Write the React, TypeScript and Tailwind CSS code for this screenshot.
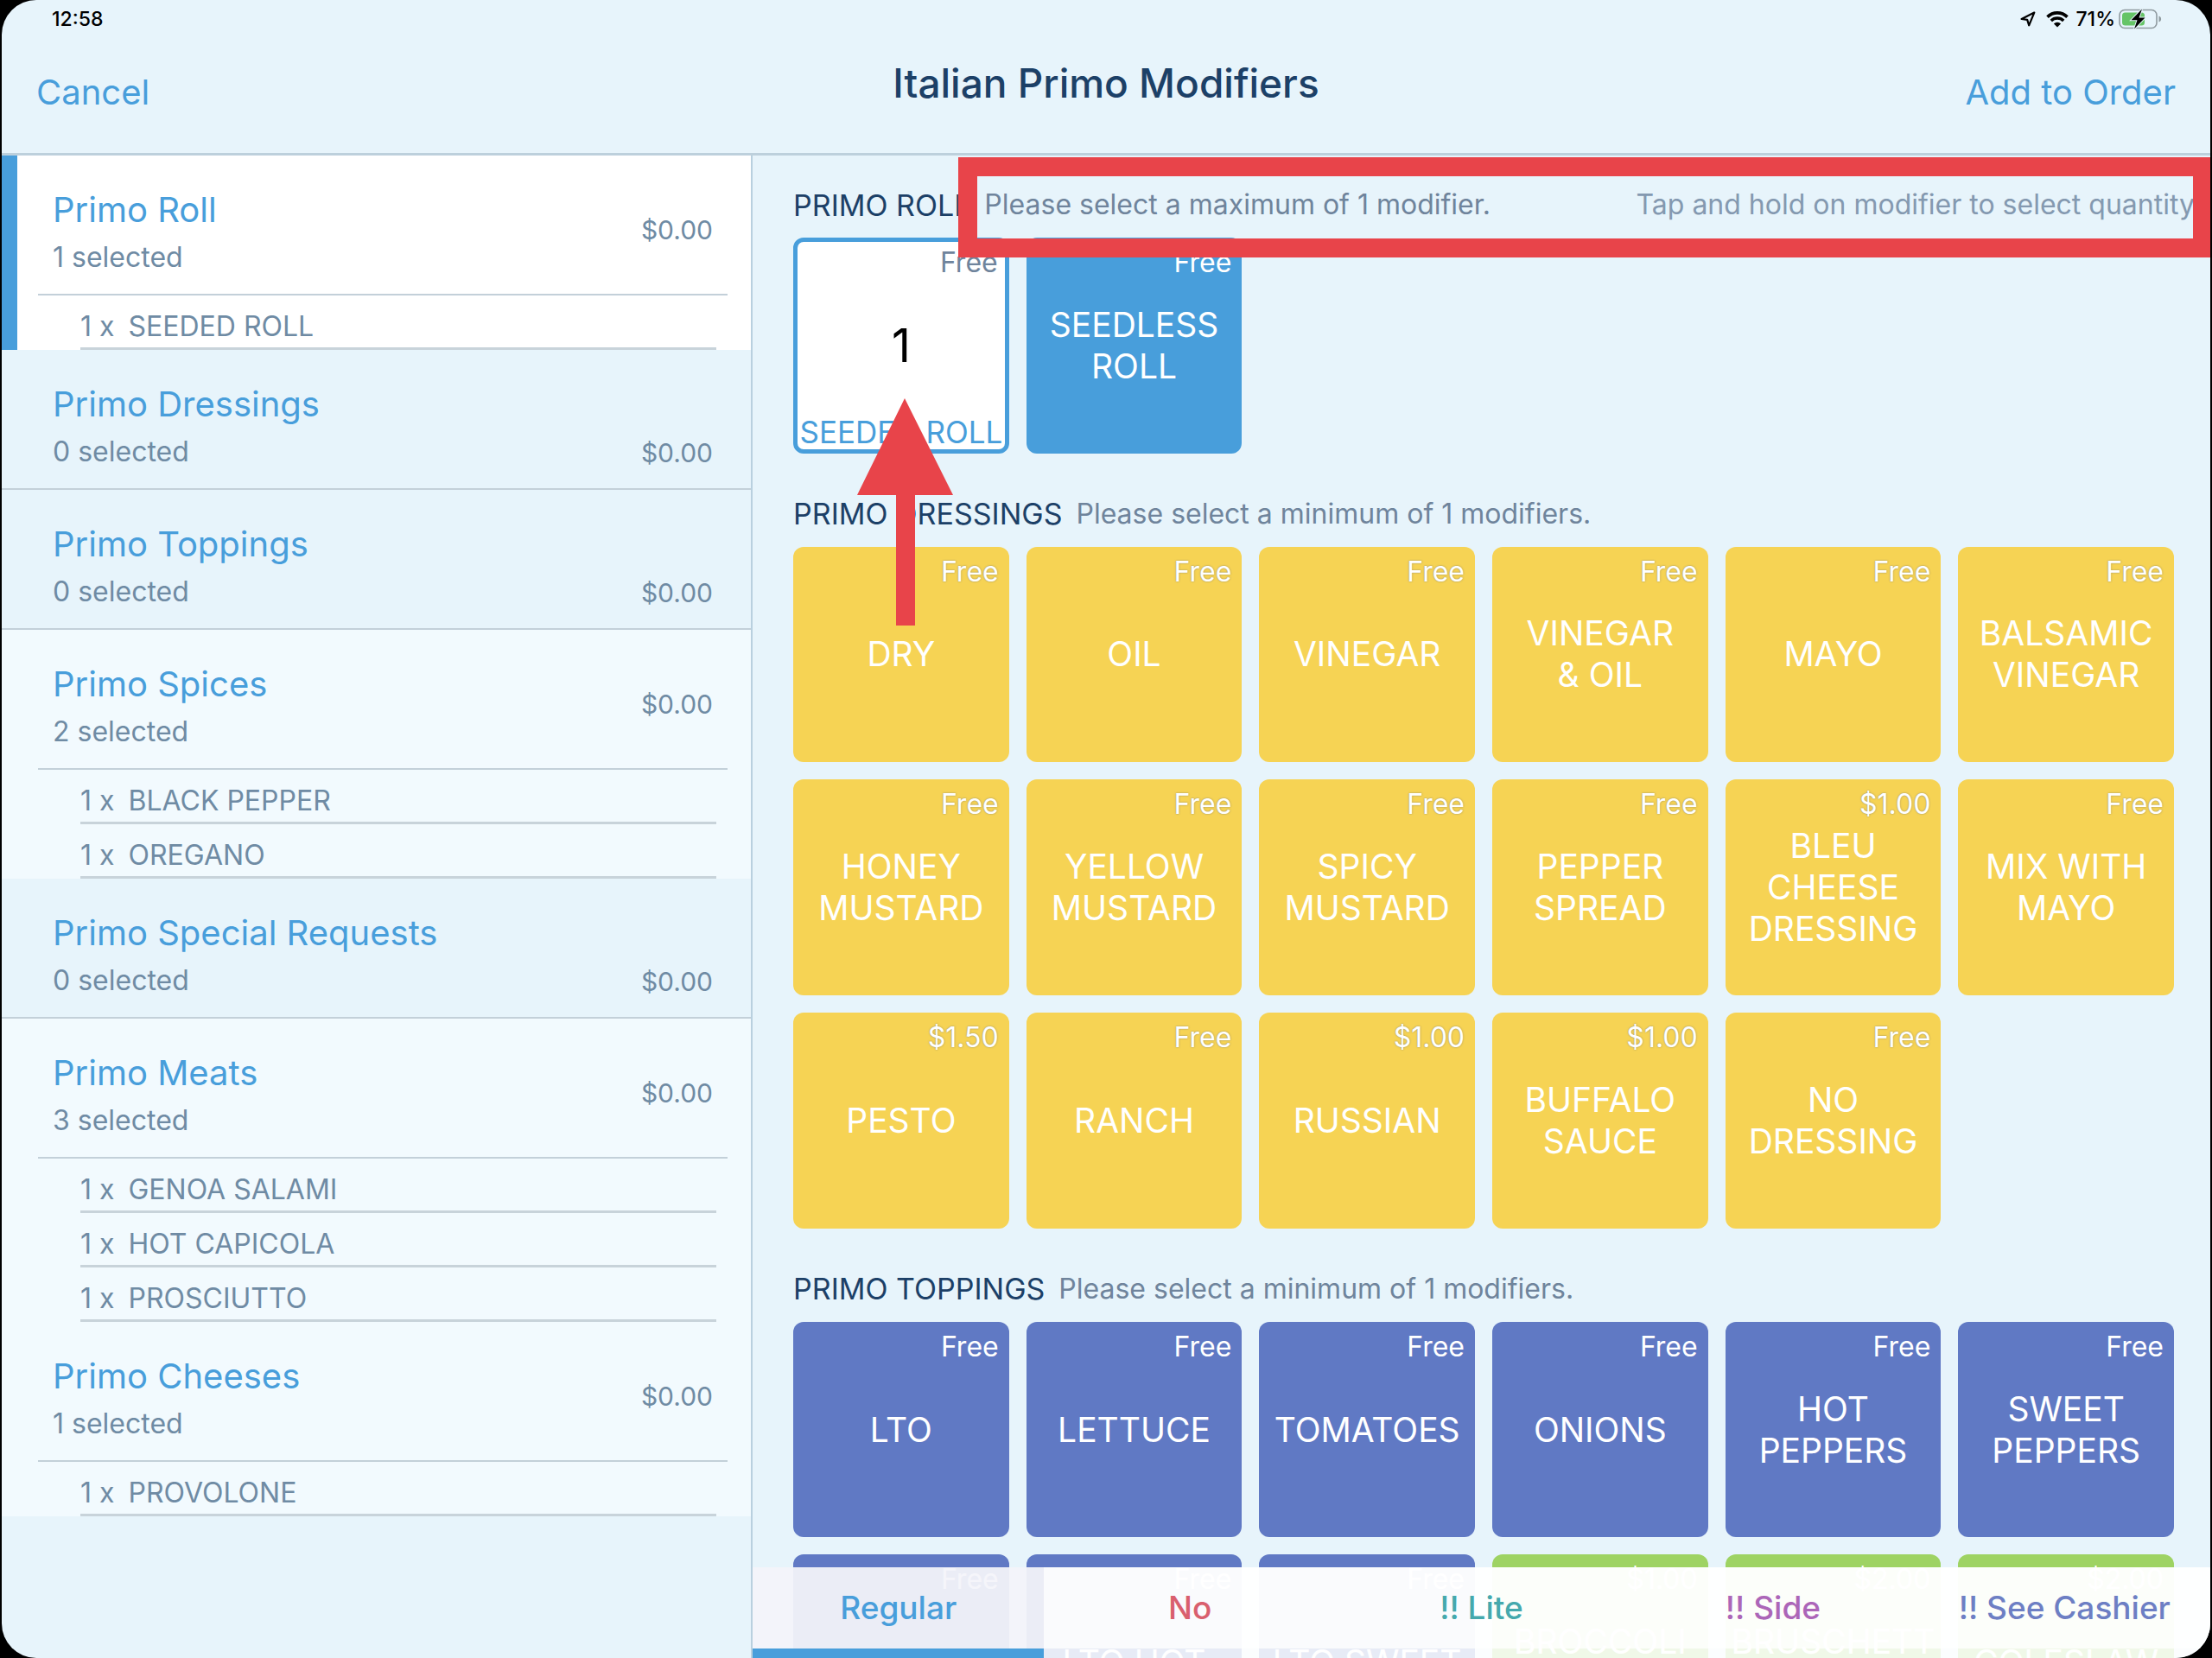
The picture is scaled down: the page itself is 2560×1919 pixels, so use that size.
import React, { useState } from 'react';

type Tone = 'blue' | 'yellow' | 'indigo' | 'green';

interface Modifier {
  name: string;
  price?: string;
  quantity?: number;
  tone?: Tone;
}

interface ModifierGroup {
  title: string;
  hint: string;
  note?: string;
  tone: Tone;
  modifiers: Modifier[];
}

interface SidebarGroup {
  name: string;
  items: string[];
}

const sidebarGroups: SidebarGroup[] = [
  { name: 'Primo Roll', items: ['SEEDED ROLL'] },
  { name: 'Primo Dressings', items: [] },
  { name: 'Primo Toppings', items: [] },
  { name: 'Primo Spices', items: ['BLACK PEPPER', 'OREGANO'] },
  { name: 'Primo Special Requests', items: [] },
  { name: 'Primo Meats', items: ['GENOA SALAMI', 'HOT CAPICOLA', 'PROSCIUTTO'] },
  { name: 'Primo Cheeses', items: ['PROVOLONE'] },
];

const modifierGroups: ModifierGroup[] = [
  {
    title: 'PRIMO ROLL',
    hint: 'Please select a maximum of 1 modifier.',
    note: 'Tap and hold on modifier to select quantity',
    tone: 'blue',
    modifiers: [{ name: 'SEEDED ROLL', quantity: 1 }, { name: 'SEEDLESS ROLL' }],
  },
  {
    title: 'PRIMO DRESSINGS',
    hint: 'Please select a minimum of 1 modifiers.',
    tone: 'yellow',
    modifiers: [
      { name: 'DRY' },
      { name: 'OIL' },
      { name: 'VINEGAR' },
      { name: 'VINEGAR &\u00a0OIL' },
      { name: 'MAYO' },
      { name: 'BALSAMIC VINEGAR' },
      { name: 'HONEY MUSTARD' },
      { name: 'YELLOW MUSTARD' },
      { name: 'SPICY MUSTARD' },
      { name: 'PEPPER SPREAD' },
      { name: 'BLEU CHEESE DRESSING', price: '$1.00' },
      { name: 'MIX WITH MAYO' },
      { name: 'PESTO', price: '$1.50' },
      { name: 'RANCH' },
      { name: 'RUSSIAN', price: '$1.00' },
      { name: 'BUFFALO SAUCE', price: '$1.00' },
      { name: 'NO DRESSING' },
    ],
  },
  {
    title: 'PRIMO TOPPINGS',
    hint: 'Please select a minimum of 1 modifiers.',
    tone: 'indigo',
    modifiers: [
      { name: 'LTO' },
      { name: 'LETTUCE' },
      { name: 'TOMATOES' },
      { name: 'ONIONS' },
      { name: 'HOT PEPPERS' },
      { name: 'SWEET PEPPERS' },
      { name: '' },
      { name: 'LTO HOT' },
      { name: 'LTO SWEET' },
      { name: 'BROCCOLI RABE', price: '$1.00', tone: 'green' },
      { name: 'BRUSCHETTA', price: '$2.00', tone: 'green' },
      { name: 'COLESLAW', price: '$2.00', tone: 'green' },
    ],
  },
];

const tabs = [
  { label: 'Regular', color: 'text-[#489edb]' },
  { label: 'No', color: 'text-[#d9606e]' },
  { label: '!! Lite', color: 'text-[#45a9ad]' },
  { label: '!! Side', color: 'text-[#ac66b8]' },
  { label: '!! See Cashier', color: 'text-[#6d7fc4]' },
];

const toneClasses: Record<Tone, string> = {
  blue: 'bg-[#489edb]',
  yellow: 'bg-[#f6d354]',
  indigo: 'bg-[#6079c4]',
  green: 'bg-[#9ed363]',
};

const StatusBar: React.FC = () => (
  <div className="flex h-11 items-center justify-between pl-[58px] pr-[56px] text-[23px] font-medium text-black">
    <span>12:58</span>
    <div className="flex items-center gap-2">
      <svg className="mr-1" width="18" height="18" viewBox="0 0 18 18" fill="none" stroke="black" strokeWidth="2.2" strokeLinejoin="round" aria-hidden="true">
        <path d="M16.3 1.6 1.6 9l6.6.9 2 6.4z" />
      </svg>
      <svg width="26" height="19" viewBox="0 0 26 19" aria-hidden="true">
        <path d="M1.5 6.6a16.3 16.3 0 0 1 23 0" fill="none" stroke="black" strokeWidth="3.6" />
        <path d="M5.8 11a10.2 10.2 0 0 1 14.4 0" fill="none" stroke="black" strokeWidth="3.4" />
        <path d="M13 18.6 8.9 14.4a5.9 5.9 0 0 1 8.2 0z" fill="black" />
      </svg>
      <span>71%</span>
      <svg className="-ml-1" width="50" height="24" viewBox="0 0 50 24" aria-hidden="true">
        <rect x="1" y="1.5" width="43" height="21" rx="6" fill="none" stroke="#8f9a9f" strokeWidth="1.6" />
        <path d="M46.5 8.5v7c1.6-.5 2.6-1.8 2.6-3.5s-1-3-2.6-3.500z" fill="#8f9a9f" />
        <rect x="4" y="4.5" width="26" height="15" rx="3.5" fill="#65c466" />
        <path d="M27 .5 14.5 13.3h7L18 23.5 30.5 10.5h-7z" fill="black" stroke="#e7f4fb" strokeWidth="2" paintOrder="stroke" />
      </svg>
    </div>
  </div>
);

const SidebarSection: React.FC<{ group: SidebarGroup; isActive: boolean; onSelect: () => void }> = ({ group, isActive, onSelect }) => {
  const hasItems = group.items.length > 0;
  const background = isActive ? 'bg-white' : hasItems ? 'bg-[#f2fafe]' : 'bg-[#e7f4fb]';

  return (
    <section className={`relative ${background}`}>
      {isActive && <div className="absolute inset-y-0 left-0 w-[18px] bg-[#489edb]" />}
      <button onClick={onSelect} className={`block w-full text-left ${hasItems ? 'pl-[42px] pr-[27px]' : ''}`}>
        <div
          className={`flex h-[162px] items-center justify-between border-b-2 border-[#c3d0d9] pt-3 ${
            hasItems ? 'pl-[17px] pr-[17px]' : 'pl-[59px] pr-[44px]'
          }`}
        >
          <div className="pt-[10px]">
            <div className="text-[40px] leading-[54px] text-[#489edb]">{group.name}</div>
            <div className="text-[32px] leading-[56px] text-[#6f8ba4]">{group.items.length} selected</div>
          </div>
          <span className={`text-[30px] leading-[54px] text-[#6f8ba4] ${hasItems ? '' : 'self-end pb-[14px]'}`}>$0.00</span>
        </div>
      </button>
      {hasItems && (
        <ul className="pl-[91px] pr-[40px]">
          {group.items.map(item => (
            <li key={item} className="flex h-[63px] items-center gap-4 border-b-3 border-[#c8d3da] pt-3 text-[32px] text-[#6f8ba4]">
              <span>1 x</span>
              <span>{item}</span>
            </li>
          ))}
        </ul>
      )}
    </section>
  );
};

const ModifierTile: React.FC<{ modifier: Modifier; tone: Tone }> = ({ modifier, tone }) => {
  const price = modifier.price ?? 'Free';

  if (modifier.quantity) {
    return (
      <button className="relative flex aspect-square items-center justify-center rounded-xl border-5 border-[#489edb] bg-white">
        <span className="absolute right-2 top-1 text-[32px] leading-[40px] text-[#6f849c]">{price}</span>
        <span className="text-[54px] text-black">{modifier.quantity}</span>
        <span className="absolute inset-x-0 bottom-0 text-center text-[35px] leading-[40px] whitespace-nowrap text-[#489edb]">{modifier.name}</span>
      </button>
    );
  }

  return (
    <button className={`relative flex aspect-square items-center justify-center rounded-xl px-1 text-white ${toneClasses[modifier.tone ?? tone]}`}>
      <span
        className={`absolute right-3 top-[9px] text-[32px] leading-[40px] ${
          tone === 'yellow' ? '[text-shadow:0_0_2px_rgba(90,100,120,0.7)]' : ''
        }`}
      >
        {price}
      </span>
      <span className="min-w-0 text-[39px] leading-[48px] wrap-anywhere">{modifier.name}</span>
    </button>
  );
};

// Red box over the hint line and the arrow pointing at the chosen tile
const Callouts: React.FC = () => (
  <>
    <div className="pointer-events-none absolute left-[238px] -right-[2px] top-[2px] h-[116px] border-[22px] border-[#e8444a]" />
    <svg className="pointer-events-none absolute left-[121px] top-[281px]" width="112" height="263" viewBox="0 0 112 263" aria-hidden="true">
      <path d="M55 0 111 112H67v151H45V112H0z" fill="#e8444a" />
    </svg>
  </>
);

const App: React.FC = () => {
  const [activeGroup, setActiveGroup] = useState('Primo Roll');
  const [activeTab, setActiveTab] = useState('Regular');

  return (
    <div className="h-screen bg-black px-[2px] font-['Inter','Liberation_Sans',sans-serif]">
      <div className="flex h-full flex-col overflow-hidden rounded-[40px] bg-[#e7f4fb]">
        <header className="h-[180px] shrink-0 border-b-3 border-[#bdd0dc]">
          <StatusBar />
          <div className="grid grid-cols-[1fr_auto_1fr] items-start px-10">
            <button className="justify-self-start pt-9 text-[40px] leading-[54px] text-[#489edb]">Cancel</button>
            <h1 className="pt-6 text-[46px] leading-[56px] font-medium text-[#1c4067]">Italian Primo Modifiers</h1>
            <button className="justify-self-end pt-9 text-[40px] leading-[54px] text-[#489edb]">Add to Order</button>
          </div>
        </header>

        <div className="flex min-h-0 flex-1">
          <aside className="w-[34%] shrink-0 overflow-hidden border-r-2 border-[#b9d0df]">
            {sidebarGroups.map(group => (
              <SidebarSection
                key={group.name}
                group={group}
                isActive={group.name === activeGroup}
                onSelect={() => setActiveGroup(group.name)}
              />
            ))}
          </aside>

          <main className="relative min-w-0 flex-1 overflow-hidden">
            <div className="flex flex-col gap-7 pl-[47px] pr-[42px] pt-[15px]">
              {modifierGroups.map(group => (
                <section key={group.title}>
                  <div className="flex h-20 items-center gap-4 pt-1 whitespace-nowrap">
                    <h2 className="text-[34px] text-[#1c4067]">{group.title}</h2>
                    <p className="text-[32px] text-[#6f849c]">{group.hint}</p>
                    {group.note && <p className="-mr-6 ml-auto text-[32px] text-[#8499b0]">{group.note}</p>}
                  </div>
                  <div className="grid grid-cols-6 gap-5">
                    {group.modifiers.map(modifier => (
                      <ModifierTile key={modifier.name} modifier={modifier} tone={group.tone} />
                    ))}
                  </div>
                </section>
              ))}
            </div>

            <nav className="absolute inset-x-0 bottom-0 flex bg-white/85">
              {tabs.map(tab => (
                <button
                  key={tab.label}
                  onClick={() => setActiveTab(tab.label)}
                  className={`flex-1 basis-0 border-b-[11px] text-[37px] leading-[94px] font-medium whitespace-nowrap ${tab.color} ${
                    tab.label === activeTab ? 'border-[#489edb] bg-[#efeff6]/60' : 'border-transparent bg-white/80 bg-clip-padding'
                  }`}
                >
                  {tab.label}
                </button>
              ))}
            </nav>

            <Callouts />
          </main>
        </div>
      </div>
    </div>
  );
};

export default App;
